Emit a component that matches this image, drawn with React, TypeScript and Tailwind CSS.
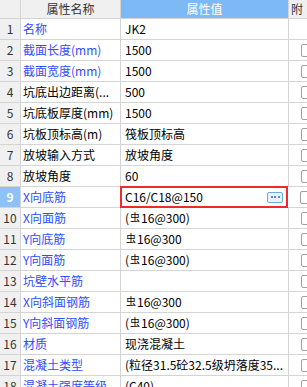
import React from "react";

const BLUE = "text-[#2f4cff]";

type Row = { name: string; value: string; blue?: boolean };

const rows: Row[] = [
  { name: "名称", value: "JK2", blue: true },
  { name: "截面长度(mm)", value: "1500", blue: true },
  { name: "截面宽度(mm)", value: "1500", blue: true },
  { name: "坑底出边距离(...", value: "500" },
  { name: "坑底板厚度(mm)", value: "1500" },
  { name: "坑板顶标高(m)", value: "筏板顶标高" },
  { name: "放坡输入方式", value: "放坡角度" },
  { name: "放坡角度", value: "60" },
  { name: "X向底筋", value: "C16/C18@150", blue: true },
  { name: "X向面筋", value: "(#16@300)", blue: true },
  { name: "Y向底筋", value: "#16@300", blue: true },
  { name: "Y向面筋", value: "(#16@300)", blue: true },
  { name: "坑壁水平筋", value: "", blue: true },
  { name: "X向斜面钢筋", value: "#16@300", blue: true },
  { name: "Y向斜面钢筋", value: "(#16@300)", blue: true },
  { name: "材质", value: "现浇混凝土", blue: true },
  { name: "混凝土类型", value: "(粒径31.5砼32.5级坍落度35...", blue: true },
  { name: "混凝土强度等级", value: "(C40)", blue: true },
];

// "#" marks the rebar grade symbol
function Value({ text }: { text: string }) {
  const parts = text.split("#");
  return (
    <span className="whitespace-nowrap">
      {parts.map((p, i) => (
        <React.Fragment key={i}>
          {i > 0 && <span className="relative -top-[2px] text-[10px] mx-[1px]">虫</span>}
          {p}
        </React.Fragment>
      ))}
    </span>
  );
}

function Check() {
  return <div className="w-[13px] h-[13px] border border-[#a0a0a0] rounded-[2px] bg-white ml-[12px] shrink-0" />;
}

export default function App() {
  return (
    <div
      className="w-[307px] h-[387px] overflow-hidden bg-white text-[12px] text-black"
      style={{ fontFamily: '"Microsoft YaHei", "Noto Sans CJK SC", sans-serif' }}
    >
      <div className="flex h-[19px] border-b border-[#d4d4d4] bg-[#f0f0f0]">
        <div className="w-[21px] shrink-0 border-r border-[#d4d4d4]" />
        <div className="w-[100px] shrink-0 border-r border-[#d4d4d4] flex items-center justify-center text-[#333]">
          属性名称
        </div>
        <div className="w-[168px] shrink-0 border-r border-[#d4d4d4] bg-[#7db9f6] text-white flex items-center justify-center">
          属性值
        </div>
        <div className="flex-1 flex items-center pl-[2px] text-[#333] overflow-hidden whitespace-nowrap">附</div>
      </div>

      {rows.map((r, i) => {
        const selected = i === 8;
        return (
          <div key={i} className="flex h-[21px] border-b border-[#d4d4d4]">
            <div
              className={`w-[21px] shrink-0 border-r border-[#d4d4d4] flex items-center justify-center ${
                selected ? "bg-[#8cc2f7] text-white font-bold" : "bg-[#f0f0f0] text-[#333]"
              }`}
            >
              {i + 1}
            </div>
            <div
              className={`w-[100px] shrink-0 border-r border-[#d4d4d4] flex items-center pl-[2px] overflow-hidden whitespace-nowrap ${
                r.blue ? BLUE : ""
              }`}
            >
              {r.name}
            </div>
            {selected ? (
              <div className="w-[168px] shrink-0 -my-[1px] -ml-[1px] h-[22px] border-2 border-[#ee2a2a] flex items-center pl-[3px] pr-[3px] justify-between">
                <Value text={r.value} />
                <div className="w-[16px] h-[11px] border border-[#6ea8e4] rounded-[2px] bg-[#eaf3fd] flex items-center justify-center gap-[1.5px]">
                  <span className="w-[2px] h-[2px] bg-[#4a90e0]" />
                  <span className="w-[2px] h-[2px] bg-[#4a90e0]" />
                  <span className="w-[2px] h-[2px] bg-[#4a90e0]" />
                </div>
              </div>
            ) : (
              <div className="w-[168px] shrink-0 border-r border-[#d4d4d4] flex items-center pl-[4px] overflow-hidden">
                <Value text={r.value} />
              </div>
            )}
            <div className="flex-1 flex items-center overflow-hidden">{i > 0 && <Check />}</div>
          </div>
        );
      })}
    </div>
  );
}
